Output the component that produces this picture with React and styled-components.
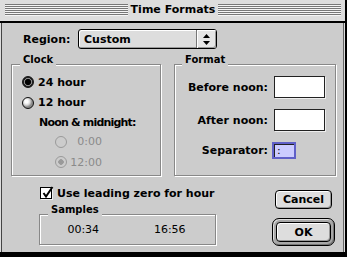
import React from 'react';
import styled, { createGlobalStyle } from 'styled-components';

const Global = createGlobalStyle`
  html, body { margin: 0; padding: 0; background: #ccc; }
  body { font-family: "DejaVu Sans", sans-serif; -webkit-font-smoothing: none; }
  * { box-sizing: border-box; }
`;

const Window = styled.div`
  width: 347px;
  height: 257px;
  background: #ddd;
  border-right: 2px solid #000;
  border-bottom: 5px solid #000;
  display: flex;
  flex-direction: column;
`;

const TitleBar = styled.div`
  height: 23px;
  flex: none;
  display: flex;
  align-items: center;
  padding: 0 4px 2px 5px;
  border-bottom: 2px solid #000;
  background: #ddd;
`;

const Stripes = styled.div`
  flex: 1;
  height: 12px;
  margin-top: 1px;
  background: repeating-linear-gradient(to bottom, #777 0 1px, #f4f4f4 1px 2px);
`;

const Title = styled.div`
  padding: 0 3px;
  font-weight: bold;
  font-size: 11px;
  line-height: 13px;
  color: #000;
`;

const Body = styled.div`
  flex: 1;
  margin: 0 1px;
  border-left: 1px solid #444;
  border-right: 1px solid #666;
  background: #ccc;
  padding: 6px 0 0 9px;
  display: flex;
  flex-direction: column;
`;

const Text = styled.span`
  font-size: ${p => p.size || 11}px;
  font-weight: ${p => (p.regular ? 'normal' : 'bold')};
  color: ${p => (p.disabled ? '#8a8a8a' : '#000')};
  letter-spacing: ${p => p.tight || 0}px;
  line-height: 13px;
  white-space: nowrap;
`;

const RegionRow = styled.div`
  display: flex;
  align-items: center;
  height: 20px;
  padding-left: 12px;
`;

const RegionLabel = styled(Text)`
  width: 55px;
`;

const Popup = styled.div`
  width: 139px;
  height: 20px;
  border: 1px solid #000;
  border-radius: 3px;
  background: #ddd;
  box-shadow: inset 1px 1px 0 #fff, inset -1px -1px 0 #999;
  display: flex;
  align-items: center;
`;

const PopupText = styled(Text)`
  flex: 1;
  padding-left: 5px;
`;

const PopupArrows = styled.div`
  width: 20px;
  height: 100%;
  border-left: 1px solid #777;
  display: flex;
  align-items: center;
  justify-content: center;
  background: #e6e6e6;
  border-radius: 0 2px 2px 0;
  box-shadow: inset 1px 1px 0 #fff, inset -1px -1px 0 #999;
`;

const GroupsRow = styled.div`
  display: flex;
  gap: 13px;
  margin-top: 15px;
`;

const GroupBox = styled.div`
  position: relative;
  width: ${p => p.w}px;
  height: ${p => p.h}px;
  border: 1px solid #888;
  box-shadow: inset 1px 1px 0 #fff, 1px 1px 0 #fff;
`;

const GroupLabel = styled.span`
  position: absolute;
  top: -11px;
  left: ${p => p.left}px;
  padding: 0 3px;
  background: #ccc;
  font-size: 10px;
  font-weight: bold;
  line-height: 12px;
  color: #000;
`;

const ClockGrid = styled.div`
  display: grid;
  grid-template-rows: 20px 21px 18px 21px 20px;
  padding-top: 7px;
`;

const OptionRow = styled.div`
  display: flex;
  align-items: center;
  gap: ${p => p.gap || 4}px;
  padding-left: ${p => p.indent}px;
`;

const Radio = styled.span`
  width: 12px;
  height: 12px;
  flex: none;
  border-radius: 50%;
  border: 1px solid ${p => (p.disabled ? '#9a9a9a' : '#111')};
  background: ${p =>
    p.disabled
      ? p.checked
        ? 'radial-gradient(circle, #9a9a9a 0 2.5px, #ccc 3px)'
        : '#ccc'
      : p.checked
      ? 'radial-gradient(circle, #000 0 2.8px, #888 3.3px 3.8px, #222 4.3px)'
      : 'radial-gradient(circle at 35% 35%, #fff 0 1.5px, #d8d8d8 3.5px, #8a8a8a 5.5px)'};
`;

const NumLabel = styled(Text)`
  width: 32px;
  text-align: right;
`;

const FormatCol = styled.div`
  display: flex;
  flex-direction: column;
  gap: 11px;
  padding-top: 11px;
`;

const FormatRow = styled.div`
  display: flex;
  align-items: center;
  gap: 6px;
`;

const FormatLabel = styled(Text)`
  width: 93px;
  text-align: right;
`;

const Field = styled.div`
  width: 51px;
  height: 22px;
  background: #fff;
  border: 1px solid #222;
  box-shadow: 1px 1px 0 #eee;
`;

const FocusRing = styled.div`
  width: 24px;
  height: 17px;
  margin-left: -2px;
  border: 2px solid #6060c8;
  background: #ccccff;
  box-shadow: inset 1px 1px 0 #222;
  display: flex;
  align-items: center;
  padding-left: 3px;
  font-size: 11px;
  line-height: 11px;
`;

const BottomRow = styled.div`
  display: flex;
`;

const LeftCol = styled.div`
  margin-left: 28px;
  display: flex;
  flex-direction: column;
`;

const CheckRow = styled.div`
  display: flex;
  align-items: center;
  gap: 5px;
  margin-top: 11px;
  padding-left: 1px;
  height: 12px;
`;

const CheckBox = styled.span`
  position: relative;
  width: 12px;
  height: 12px;
  flex: none;
  background: #fff;
  border: 1px solid #000;
  box-shadow: 1px 1px 0 #eee;
`;

const CheckMark = styled.svg`
  position: absolute;
  left: 0;
  top: -2px;
`;

const SamplesGrid = styled.div`
  height: 100%;
  display: grid;
  grid-template-columns: 1fr 1fr;
  align-items: center;
  justify-items: center;
  padding-right: 2px;
`;

const RightCol = styled.div`
  margin-left: 56px;
  width: 63px;
  display: flex;
  flex-direction: column;
  align-items: center;
`;

const Button = styled.div`
  width: ${p => p.w}px;
  height: ${p => p.h}px;
  margin-top: ${p => p.mt || 0}px;
  border: 1px solid #000;
  border-radius: 4px;
  background: #ddd;
  box-shadow: inset 1px 1px 0 #fff, inset -1px -1px 0 #999;
  display: flex;
  align-items: center;
  justify-content: center;
  font-size: 11px;
  font-weight: bold;
  line-height: 13px;
`;

const DefaultRing = styled.div`
  width: 63px;
  height: 28px;
  margin-top: 9px;
  border: 1px solid #000;
  border-radius: 7px;
  padding: 3px;
  background: #a8a8a8;
  box-shadow: inset 1px 1px 0 #ddd, inset -1px -1px 0 #777;
`;

export default function App() {
  return (
    <>
      <Global />
      <Window>
        <TitleBar>
          <Stripes />
          <Title>Time Formats</Title>
          <Stripes />
        </TitleBar>
        <Body>
          <RegionRow>
            <RegionLabel>Region:</RegionLabel>
            <Popup>
              <PopupText>Custom</PopupText>
              <PopupArrows>
                <svg width="7" height="11" viewBox="0 0 7 11">
                  <polygon points="0,4 3.5,0 7,4" fill="#000" />
                  <polygon points="0,7 3.5,11 7,7" fill="#000" />
                </svg>
              </PopupArrows>
            </Popup>
          </RegionRow>

          <GroupsRow>
            <GroupBox w={150} h={112}>
              <GroupLabel left={8}>Clock</GroupLabel>
              <ClockGrid>
                <OptionRow indent={10}>
                  <Radio checked />
                  <Text>24 hour</Text>
                </OptionRow>
                <OptionRow indent={10}>
                  <Radio />
                  <Text>12 hour</Text>
                </OptionRow>
                <OptionRow indent={27}>
                  <Text tight={-0.8}>Noon &amp; midnight:</Text>
                </OptionRow>
                <OptionRow indent={43} gap={3}>
                  <Radio disabled />
                  <NumLabel regular disabled>0:00</NumLabel>
                </OptionRow>
                <OptionRow indent={43} gap={3}>
                  <Radio disabled checked />
                  <NumLabel regular disabled>12:00</NumLabel>
                </OptionRow>
              </ClockGrid>
            </GroupBox>

            <GroupBox w={162} h={112}>
              <GroupLabel left={7}>Format</GroupLabel>
              <FormatCol>
                <FormatRow>
                  <FormatLabel>Before noon:</FormatLabel>
                  <Field />
                </FormatRow>
                <FormatRow>
                  <FormatLabel>After noon:</FormatLabel>
                  <Field />
                </FormatRow>
                <FormatRow>
                  <FormatLabel>Separator:</FormatLabel>
                  <FocusRing>:</FocusRing>
                </FormatRow>
              </FormatCol>
            </GroupBox>
          </GroupsRow>

          <BottomRow>
            <LeftCol>
              <CheckRow>
                <CheckBox>
                  <CheckMark width="13" height="13" viewBox="0 0 13 13">
                    <path d="M2.5 7 L5 10.5 L11.5 1" stroke="#000" strokeWidth="2" fill="none" />
                  </CheckMark>
                </CheckBox>
                <Text>Use leading zero for hour</Text>
              </CheckRow>
              <GroupBox w={177} h={31} style={{ marginTop: 15 }}>
                <GroupLabel left={8}>Samples</GroupLabel>
                <SamplesGrid>
                  <Text regular>00:34</Text>
                  <Text regular>16:56</Text>
                </SamplesGrid>
              </GroupBox>
            </LeftCol>
            <RightCol>
              <Button w={57} h={19} mt={14}>Cancel</Button>
              <DefaultRing>
                <Button w={55} h={20}>OK</Button>
              </DefaultRing>
            </RightCol>
          </BottomRow>
        </Body>
      </Window>
    </>
  );
}
